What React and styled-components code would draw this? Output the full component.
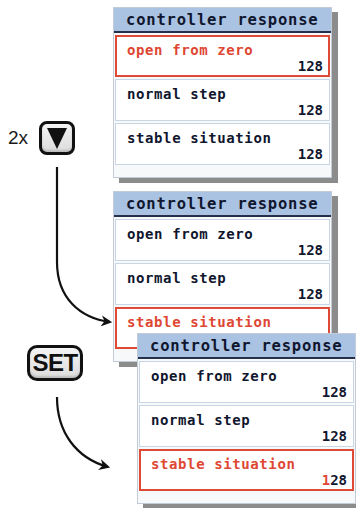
import React from 'react';
import styled, { createGlobalStyle } from 'styled-components';

const GlobalStyle = createGlobalStyle`
  body {
    margin: 0;
    background: #ffffff;
  }
`;

const Stage = styled.div`
  position: relative;
  width: 356px;
  height: 508px;
  display: flex;
  overflow: hidden;
  background: #ffffff;
`;

const LeftCol = styled.div`
  width: 114px;
  display: flex;
  flex-direction: column;
  padding-top: 121px;
  box-sizing: border-box;
`;

const KeyRow = styled.div`
  display: flex;
  align-items: center;
  gap: 11px;
  padding-left: 8px;
`;

const Times = styled.span`
  font-family: "Liberation Sans", Arial, sans-serif;
  font-size: 19px;
  color: #1a1a1a;
`;

const Key = styled.div`
  box-sizing: border-box;
  width: ${p => p.$w}px;
  height: ${p => p.$h}px;
  border: 3px solid #111;
  border-radius: ${p => p.$r}px;
  background: linear-gradient(180deg, #f4f4f4 0%, #dcdcdc 100%);
  box-shadow: inset 0 -2px 2px rgba(0, 0, 0, 0.15);
  display: flex;
  align-items: center;
  justify-content: center;
  font-family: "Liberation Sans", Arial, sans-serif;
  font-weight: 700;
  font-size: 24px;
  color: #111;
`;

const SetKey = styled(Key)`
  margin: 190px 0 0 27px;
  letter-spacing: -0.5px;
`;

const RightCol = styled.div`
  display: flex;
  flex-direction: column;
  padding-top: 7px;
`;

const Panel = styled.div`
  box-sizing: border-box;
  width: 219px;
  height: 171px;
  background: #f6f8fa;
  border: 1px solid #c3ccd6;
  box-shadow: 6px 5px 0 #8c8c8c;
  display: flex;
  flex-direction: column;
  gap: 2px;
  margin-top: ${p => p.$mt || 0}px;
  margin-left: ${p => p.$ml || 0}px;
  position: ${p => (p.$front ? 'relative' : 'static')};
  z-index: ${p => (p.$front ? 2 : 'auto')};
`;

const Header = styled.div`
  box-sizing: border-box;
  height: 25px;
  background: #aac3e3;
  border-bottom: 2px solid #26304a;
  padding: 4px 0 0 12px;
  font-family: "DejaVu Sans Mono", monospace;
  font-weight: 700;
  font-size: 15.5px;
  letter-spacing: 0.8px;
  line-height: 17px;
  color: #10162e;
`;

const Row = styled.div`
  box-sizing: border-box;
  height: 42px;
  margin: 0 1px;
  background: #ffffff;
  border: ${p => (p.$active ? '2px solid #dd4a36' : '1px solid #c9d6e6')};
  padding: ${p => (p.$active ? '6px 5px 1px 10px' : '7px 6px 2px 11px')};
  display: flex;
  flex-direction: column;
  font-family: "DejaVu Sans Mono", monospace;
  font-weight: 700;
  color: #10162e;
`;

const Label = styled.span`
  font-size: 14px;
  letter-spacing: 0.6px;
  line-height: 15px;
  color: ${p => (p.$active ? '#de4733' : '#10162e')};
`;

const Value = styled.span`
  align-self: flex-end;
  font-size: 14px;
  letter-spacing: 0;
  line-height: 16px;
`;

const Digit = styled.span`
  color: ${p => (p.$hot ? '#de4733' : 'inherit')};
`;

const Arrows = styled.svg`
  position: absolute;
  left: 0;
  top: 0;
  pointer-events: none;
`;

const rows = ['open from zero', 'normal step', 'stable situation'];

const ResponsePanel = ({ active, cursor, ...rest }) => (
  <Panel {...rest}>
    <Header>controller response</Header>
    {rows.map((r, i) => (
      <Row key={r} $active={i === active}>
        <Label $active={i === active}>{r}</Label>
        <Value>
          {i === active && cursor ? (
            <>
              <Digit $hot>1</Digit>28
            </>
          ) : (
            '128'
          )}
        </Value>
      </Row>
    ))}
  </Panel>
);

const DownTriangle = () => (
  <svg width="20" height="21" viewBox="0 0 20 21">
    <polygon points="0,0 20,0 10,21" fill="#111" />
  </svg>
);

export default function App() {
  return (
    <>
      <GlobalStyle />
      <Stage>
        <LeftCol>
          <KeyRow>
            <Times>2x</Times>
            <Key $w={36} $h={34} $r={8}>
              <DownTriangle />
            </Key>
          </KeyRow>
          <SetKey $w={56} $h={36} $r={10}>SET</SetKey>
        </LeftCol>
        <RightCol>
          <ResponsePanel active={0} />
          <ResponsePanel active={2} $mt={13} />
          <ResponsePanel active={2} cursor $mt={-29} $ml={24} $front />
        </RightCol>
        <Arrows width="356" height="508" viewBox="0 0 356 508">
          <defs>
            <marker id="head" viewBox="0 0 10 10" refX="8" refY="5" markerWidth="5" markerHeight="5" orient="auto">
              <path d="M0,0 L10,5 L0,10 L3,5 Z" fill="#111" />
            </marker>
          </defs>
          <path d="M57,167 L57,262 C57,298 80,318 110,322" fill="none" stroke="#111" strokeWidth="2.2" markerEnd="url(#head)" />
          <path d="M57,397 C57,432 76,458 108,467" fill="none" stroke="#111" strokeWidth="2.2" markerEnd="url(#head)" />
        </Arrows>
      </Stage>
    </>
  );
}
